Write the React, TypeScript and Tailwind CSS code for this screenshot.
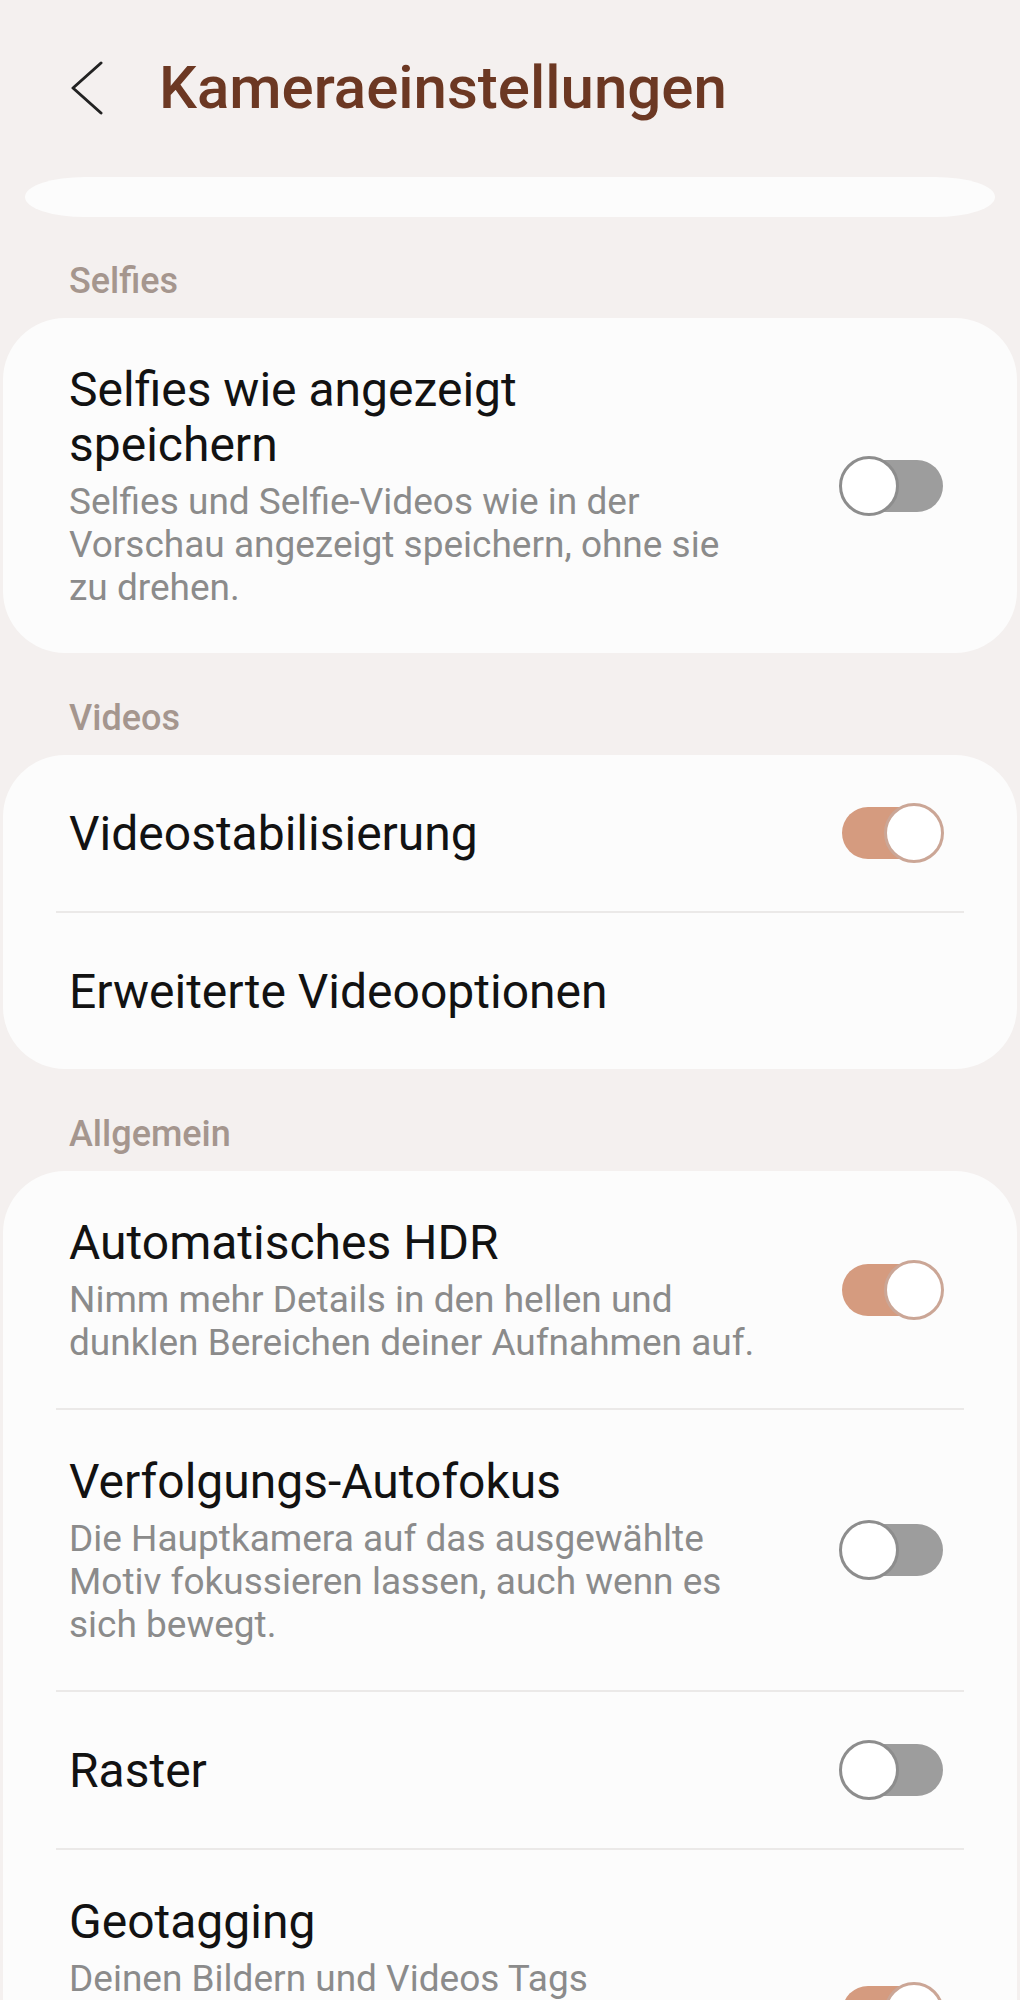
type Item = {
  title: string[];
  sub?: string[];
  toggle?: boolean;
};

type Group = {
  label: string;
  items: Item[];
};

const groups: Group[] = [
  {
    label: 'Selfies',
    items: [
      {
        title: ['Selfies wie angezeigt', 'speichern'],
        sub: [
          'Selfies und Selfie-Videos wie in der',
          'Vorschau angezeigt speichern, ohne sie',
          'zu drehen.',
        ],
        toggle: false,
      },
    ],
  },
  {
    label: 'Videos',
    items: [
      { title: ['Videostabilisierung'], toggle: true },
      { title: ['Erweiterte Videooptionen'] },
    ],
  },
  {
    label: 'Allgemein',
    items: [
      {
        title: ['Automatisches HDR'],
        sub: ['Nimm mehr Details in den hellen und', 'dunklen Bereichen deiner Aufnahmen auf.'],
        toggle: true,
      },
      {
        title: ['Verfolgungs-Autofokus'],
        sub: [
          'Die Hauptkamera auf das ausgewählte',
          'Motiv fokussieren lassen, auch wenn es',
          'sich bewegt.',
        ],
        toggle: false,
      },
      { title: ['Raster'], toggle: false },
      {
        title: ['Geotagging'],
        sub: [
          'Deinen Bildern und Videos Tags',
          'mit Standortinformationen hinzufügen,',
          'die angeben, wo sie aufgenommen',
          'wurden.',
        ],
        toggle: true,
      },
    ],
  },
];

function Toggle({ on }: { on: boolean }) {
  return (
    <div className="relative h-[60px] w-[105px] shrink-0">
      <div
        className={`absolute left-[3px] right-[1px] top-[4px] h-[52px] rounded-full ${
          on ? 'bg-[#d59b7f]' : 'bg-[#9d9d9d]'
        }`}
      />
      <div
        className={`absolute top-0 h-[60px] w-[60px] rounded-full border-[3px] bg-white ${
          on ? 'right-0 border-[#cba696]' : 'left-0 border-[#8d8d8d]'
        }`}
      />
    </div>
  );
}

function Row({ item }: { item: Item }) {
  return (
    <div className="flex min-h-[156px] items-center py-[44px] pl-[66px] pr-[73px]">
      <div className="flex-1">
        <div className="text-[48px] leading-[55px] text-[#121212]">
          {item.title.map((line) => (
            <div key={line} className="whitespace-nowrap">
              {line}
            </div>
          ))}
        </div>
        {item.sub && (
          <div className="mt-[8px] text-[37px] leading-[43px] text-[#8b8b8b]">
            {item.sub.map((line) => (
              <div key={line} className="whitespace-nowrap">
                {line}
              </div>
            ))}
          </div>
        )}
      </div>
      {item.toggle !== undefined && <Toggle on={item.toggle} />}
    </div>
  );
}

export default function App() {
  return (
    <div
      className="min-h-screen overflow-hidden bg-[#f4f0ef] pb-10"
      style={{ fontFamily: 'Roboto, "Noto Sans", sans-serif' }}
    >
      {/* app bar */}
      <div className="flex items-center pl-[70px] pt-[53px]">
        <svg width="34" height="54" viewBox="0 0 34 54" fill="none">
          <path
            d="M31 2 L3 27 L31 52"
            stroke="#222"
            strokeWidth="3"
            strokeLinecap="round"
            strokeLinejoin="round"
          />
        </svg>
        <h1 className="ml-[55px] text-[60px] font-medium leading-[70px] text-[#6c3823]">
          Kameraeinstellungen
        </h1>
      </div>

      {/* bottom of the card scrolled away above */}
      <div className="mx-[25px] mt-[54px] h-[40px] rounded-[60px/20px] bg-[#fcfcfc]" />

      {groups.map((group, gi) => (
        <div key={group.label} className={gi === 0 ? 'mt-[44px]' : 'mt-[45px]'}>
          <div className="px-[69px] text-[36px] font-medium leading-[41px] text-[#a5968e]">
            {group.label}
          </div>
          <div className="mx-[3px] mt-[16px] rounded-[62px] bg-[#fcfcfc]">
            {group.items.map((item, i) => (
              <div key={item.title[0]}>
                {i > 0 && <div className="mx-[53px] h-[2px] bg-[#ebe9e8]" />}
                <Row item={item} />
              </div>
            ))}
          </div>
        </div>
      ))}
    </div>
  );
}
